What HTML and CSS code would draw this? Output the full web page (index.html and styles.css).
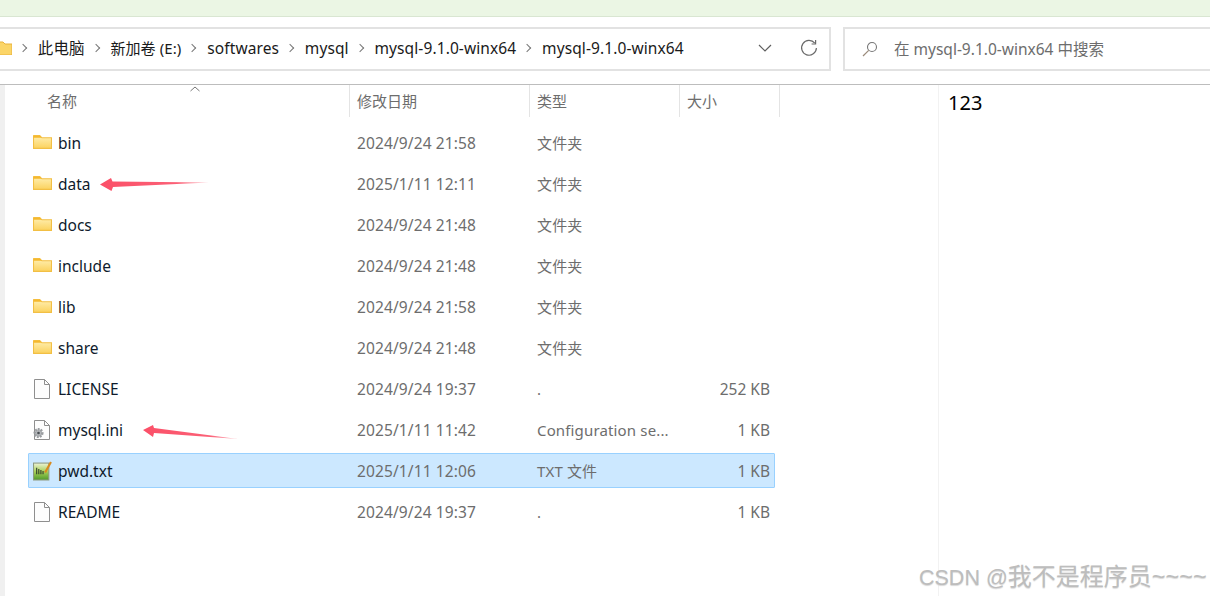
FILE: index.html
```html
<!DOCTYPE html>
<html lang="zh-CN">
<head>
<meta charset="utf-8">
<title>mysql-9.1.0-winx64</title>
<link rel="stylesheet" href="styles.css">
</head>
<body>
<div class="band"></div>
<div class="toolbar">
  <div class="address">
    <svg class="crumb-folder" width="12" height="14" viewBox="0 0 12 14"><path d="M-4 1h7l2 2h7v11H-4z" fill="#fbd568" stroke="#e9b33c"/></svg>
    <span class="sep"></span><span class="crumb">此电脑</span>
    <span class="sep"></span><span class="crumb crumb-drive">新加卷 (E:)</span>
    <span class="sep"></span><span class="crumb">softwares</span>
    <span class="sep"></span><span class="crumb">mysql</span>
    <span class="sep"></span><span class="crumb">mysql-9.1.0-winx64</span>
    <span class="sep"></span><span class="crumb">mysql-9.1.0-winx64</span>
    <span class="spacer"></span>
    <svg class="chev" width="14" height="8" viewBox="0 0 14 8"><path d="M1 1l6 6 6-6" fill="none" stroke="#5f5f5f" stroke-width="1.2"/></svg>
    <svg class="refresh" width="18" height="18" viewBox="0 0 18 18"><path d="M14.8 4.2A7.400 7.400 0 1 0 16.400 9" fill="none" stroke="#6a6a6a" stroke-width="1.2"/><path d="M15.600 1v4h-4" fill="none" stroke="#6a6a6a" stroke-width="1.2"/></svg>
  </div>
  <div class="search">
    <svg class="lens" width="16" height="16" viewBox="0 0 16 16"><circle cx="10" cy="6" r="4.500" fill="none" stroke="#777" stroke-width="1.1"/><path d="M6.700 9.300L1 15" stroke="#9a8a7a" stroke-width="1.2"/></svg>
    <span class="search-text">在 mysql-9.1.0-winx64 中搜索</span>
  </div>
</div>
<main class="body">
  <div class="strip"></div>
  <section class="list">
    <div class="head">
      <div class="hcell hname">名称<svg class="sort" width="10" height="6" viewBox="0 0 10 6"><path d="M.5 5L5 1l4.500 4" fill="none" stroke="#777"/></svg></div>
      <div class="hcell">修改日期</div>
      <div class="hcell">类型</div>
      <div class="hcell">大小</div>
    </div>
    <div class="rows">
      <div class="row"><span class="name"><svg class="ico" viewBox="0 0 18 14"><use href="#folder"/></svg>bin</span><span class="date">2024/9/24 21:58</span><span class="type">文件夹</span><span class="size"></span></div>
      <div class="row"><span class="name"><svg class="ico" viewBox="0 0 18 14"><use href="#folder"/></svg>data</span><span class="date">2025/1/11 12:11</span><span class="type">文件夹</span><span class="size"></span></div>
      <div class="row"><span class="name"><svg class="ico" viewBox="0 0 18 14"><use href="#folder"/></svg>docs</span><span class="date">2024/9/24 21:48</span><span class="type">文件夹</span><span class="size"></span></div>
      <div class="row"><span class="name"><svg class="ico" viewBox="0 0 18 14"><use href="#folder"/></svg>include</span><span class="date">2024/9/24 21:48</span><span class="type">文件夹</span><span class="size"></span></div>
      <div class="row"><span class="name"><svg class="ico" viewBox="0 0 18 14"><use href="#folder"/></svg>lib</span><span class="date">2024/9/24 21:58</span><span class="type">文件夹</span><span class="size"></span></div>
      <div class="row"><span class="name"><svg class="ico" viewBox="0 0 18 14"><use href="#folder"/></svg>share</span><span class="date">2024/9/24 21:48</span><span class="type">文件夹</span><span class="size"></span></div>
      <div class="row"><span class="name"><svg class="ico doc" viewBox="0 0 18 20"><use href="#file"/></svg>LICENSE</span><span class="date">2024/9/24 19:37</span><span class="type">.</span><span class="size">252 KB</span></div>
      <div class="row"><span class="name"><svg class="ico doc" viewBox="0 0 18 20"><use href="#file"/><circle cx="5.500" cy="13" r="3.800" fill="#b4b7ba" stroke="#9a9da0" stroke-width="2.500" stroke-dasharray="1.700 1.100"/><circle cx="5.500" cy="13" r="1.300" fill="#4a4e52"/></svg>mysql.ini</span><span class="date">2025/1/11 11:42</span><span class="type">Configuration se...</span><span class="size">1 KB</span></div>
      <div class="row selected"><span class="name"><svg class="ico txt" viewBox="0 0 18 18"><defs><linearGradient id="leaf" x2="0" y2="1"><stop offset="0" stop-color="#eef3d8"/><stop offset=".5" stop-color="#a8d058"/><stop offset="1" stop-color="#4f9a2c"/></linearGradient></defs><rect x=".5" y="1.500" width="14.500" height="16" fill="url(#leaf)" stroke="#8d9a80"/><path d="M3.500 6v6M5.500 7v5M7.500 8v4M9.500 9v3" stroke="#2d3a2a"/><path d="M17 .5l-5.500 10" stroke="#d98a1e" stroke-width="2"/></svg>pwd.txt</span><span class="date">2025/1/11 12:06</span><span class="type">TXT 文件</span><span class="size">1 KB</span></div>
      <div class="row"><span class="name"><svg class="ico doc" viewBox="0 0 18 20"><use href="#file"/></svg>README</span><span class="date">2024/9/24 19:37</span><span class="type">.</span><span class="size">1 KB</span></div>
    </div>
  </section>
  <aside class="preview">123</aside>
</main>
<svg class="arrow arrow-data" width="110" height="15" viewBox="0 0 110 15"><defs><linearGradient id="fade"><stop offset="0" stop-color="#fb5068"/><stop offset=".7" stop-color="#fb6076"/><stop offset="1" stop-color="#fdc4cc"/></linearGradient></defs><path d="M0 7.500L11 1l1.500 3.500L109 5.500l-96 4.500-1.500 4z" fill="url(#fade)"/></svg>
<svg class="arrow arrow-ini" width="96" height="16" viewBox="0 0 96 16"><path d="M0 6L10 1l1 3 84 11-84-6-1 4z" fill="url(#fade)"/></svg>
<div class="watermark"><span class="wm-latin">CSDN @</span><span class="wm-cjk">我不是程序员</span><span class="wm-tilde">~~~~</span></div>
<svg class="defs" width="0" height="0">
  <symbol id="folder" viewBox="0 0 18 14"><defs><linearGradient id="fold" x2="0" y2="1"><stop offset="0" stop-color="#fff0b4"/><stop offset="1" stop-color="#fbd25e"/></linearGradient></defs><path d="M.5 1.500h6l2 2h9v10H.5z" fill="url(#fold)" stroke="#f2bf44"/><path d="M.5 1h6l2 2.500H.5z" fill="#f5b82e"/></symbol>
  <symbol id="file" viewBox="0 0 18 20"><path d="M1.500.5h10l5 5v14h-15z" fill="#fdfdfd" stroke="#8f8f8f"/><path d="M11.500.5v5h5" fill="none" stroke="#8f8f8f"/></symbol>
</svg>
</body>
</html>
```
FILE: styles.css
```css
* { box-sizing: border-box; }
html, body { margin: 0; height: 100%; }
body {
  position: relative;
  width: 1210px;
  height: 596px;
  overflow: hidden;
  background: #fff;
  font-family: "Noto Sans", "Noto Sans CJK SC", sans-serif;
  font-size: 15px;
  color: #1a1a1a;
}
.band { height: 17px; background: #ebf6e4; border-bottom: 1px solid #d9e6d2; }
.toolbar { display: flex; gap: 12px; padding-top: 10px; height: 68px; border-bottom: 1px solid #bdbdbd; }
.address, .search { height: 44px; border: 2px solid #e2e2e2; display: flex; align-items: center; }
.address { width: 831px; border-left: 0; padding: 0 11px 2px 0; flex: none; font-size: 15.5px; }
.search { flex: 1; border-right: 0; padding: 0 0 1px 17px; color: #6d6d6d; font-size: 15.5px; }
.crumb-folder { flex: none; }
.sep { width: 6px; height: 6px; border-top: 1.4px solid #777; border-right: 1.4px solid #777; transform: rotate(45deg); margin: 0 11.8px 0 8px; flex: none; }
.crumb { white-space: nowrap; line-height: 20px; letter-spacing: .1px; }
.crumb-drive { font-size: 15px; }
.spacer { flex: 1; }
.chev { margin-right: 28px; }
.lens { margin-right: 16px; }
.search-text { white-space: nowrap; }
.body { display: flex; height: 511px; }
.strip { width: 5px; background: #f0f0f0; flex: none; }
.list { width: 933px; flex: none; }
.head { display: grid; grid-template-columns: 345px 180px 150px 100px; height: 32px; }
.hcell { position: relative; padding-left: 7px; border-right: 1px solid #e4e4e4; color: #6d6d6d; line-height: 32px; }
.hname { padding-left: 42px; }
.sort { position: absolute; left: 185px; top: 1px; }
.rows { display: flex; flex-direction: column; gap: 6px; padding: 8px 0 0 23px; }
.row { display: grid; grid-template-columns: 322px 180px 150px 90px; width: 747px; height: 35px; align-items: center; border: 1px solid transparent; border-radius: 1px; }
.row.selected { background: #cce8ff; border-color: #99d1ff; }
.name { display: flex; align-items: center; white-space: nowrap; color: #0f1b2c; padding-left: 4px; font-size: 15.5px; }
.ico { width: 19px; height: 15px; margin: -2px 6px 0 0; flex: none; }
.ico.doc { width: 18px; height: 20px; margin: 0 7px 0 0; }
.ico.txt { width: 19px; height: 20px; margin: 0 6px 0 0; }
.date, .type { padding-left: 6px; color: #6d6d6d; white-space: nowrap; }
.date { font-size: 15.5px; letter-spacing: .12px; }
.type { letter-spacing: .15px; }
.size { text-align: right; padding-right: 1px; color: #6d6d6d; white-space: nowrap; font-size: 15.5px; }
.preview { flex: 1; border-left: 1px solid #f2f2f2; padding: 4px 0 0 9px; font-size: 20px; color: #000; line-height: 27px; }
.arrow { position: absolute; }
.arrow-data { left: 100px; top: 177px; }
.arrow-ini { left: 143px; top: 424px; }
.watermark { position: absolute; left: 919px; top: 561px; line-height: 32px; color: #bdbdbd; text-shadow: 0 1px 1px #d8d8d8; white-space: nowrap; font-family: "Liberation Sans", "Noto Sans CJK SC", sans-serif; }
.wm-latin { font-size: 21.5px; }
.wm-cjk { font-size: 24px; }
.wm-tilde { font-size: 23.5px; }
.defs { position: absolute; }
```
